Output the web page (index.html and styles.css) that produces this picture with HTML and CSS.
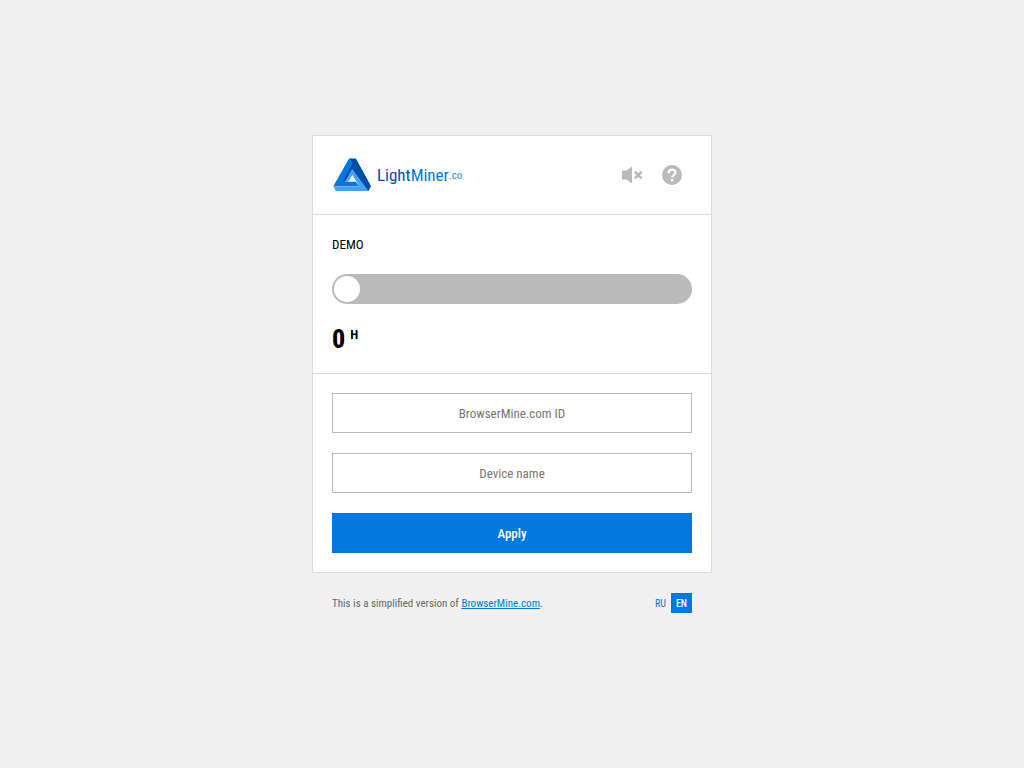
FILE: index.html
```html
<!DOCTYPE html>
<html lang="en">
<head>
<meta charset="utf-8">
<meta name="viewport" content="width=device-width, initial-scale=1">
<title>LightMiner.co</title>
<link rel="stylesheet" href="styles.css">
</head>
<body>
<div class="page">
  <main class="card">
    <header class="header">
      <a class="brand" href="#">
        <svg class="logo" viewBox="0 0 40 40" aria-hidden="true">
          <path fill="#0078e0" d="M17 3.600L1.300 31.200H27.300L23.700 26.700H12L21.500 9.500L20 3.600z"/>
          <path fill="#0050a4" d="M18 3.600H23.700L38.800 31L36.400 36L20.300 14.300L13.300 26.700H10.500L20.700 8.500z"/>
          <path fill="#44a1fa" d="M1.300 31.200L4 36H36.400L38.200 32.500L20.300 14L13.300 26.700H16.300L20.300 20L27.300 31.200z"/>
          <path fill="#0050a4" d="M20.300 8V14L36.400 36L38.800 31L23.700 3.600z"/>
        </svg>
        <span class="wordmark"><span class="light">Light</span><span class="miner">Miner</span><span class="tld">.co</span></span>
      </a>
      <div class="tools">
        <button class="tool" type="button" aria-label="Sound off">
          <svg class="icon" viewBox="0 0 24 24" aria-hidden="true"><path fill="currentColor" d="M2 7.500h4.500L11 4h1v16h-1l-4.500-3.500H2z"/><path fill="none" stroke="currentColor" stroke-width="2.500" d="M14.800 8.600l6.800 6.800M21.600 8.600l-6.800 6.800"/></svg>
        </button>
        <button class="tool" type="button" aria-label="Help">
          <svg class="icon" viewBox="0 0 24 24" aria-hidden="true"><circle cx="12" cy="12" r="10" fill="currentColor"/><path fill="none" stroke="#fff" stroke-width="2.200" d="M8.600 10.200C8.600 5.500 15.500 5.700 15.500 9.700C15.500 11.900 12.200 12.100 12.200 14.500"/><path fill="#fff" d="M11 16h2.400v2.300H11z"/></svg>
        </button>
      </div>
    </header>
    <section class="status">
      <h1 class="title">DEMO</h1>
      <input class="power" type="range" min="0" max="100" value="0" aria-label="Power">
      <p class="rate">0 <sup class="unit">H</sup></p>
    </section>
    <form class="form">
      <input class="field" type="text" placeholder="BrowserMine.com ID" aria-label="BrowserMine.com ID">
      <input class="field" type="text" placeholder="Device name" aria-label="Device name">
      <button class="apply" type="button">Apply</button>
    </form>
  </main>
  <footer class="footer">
    <p class="note">This is a simplified version of <a class="link" href="#">BrowserMine.com</a>.</p>
    <nav class="languages" aria-label="Language">
      <a class="language" href="#">RU</a>
      <a class="language current" href="#" aria-current="true">EN</a>
    </nav>
  </footer>
</div>
</body>
</html>
```
FILE: styles.css
```css
* { box-sizing: border-box; }

body {
  margin: 0;
  min-height: 100vh;
  display: flex;
  align-items: center;
  justify-content: center;
  background: #f0f0f0;
  color: #000;
  font: 13px/20px "Roboto Condensed", "Liberation Sans Narrow", Roboto, sans-serif;
}

input, button { font: inherit; }

.page { width: 100%; max-width: 400px; }

.card { background: #fff; border: 1px solid #dcdcdc; }

.header {
  display: flex;
  align-items: center;
  justify-content: space-between;
  padding: 19px;
  border-bottom: 1px solid #dcdcdc;
}

.brand { display: flex; align-items: center; gap: 5px; text-decoration: none; }
.logo { display: block; width: 40px; height: 40px; }
.wordmark { display: flex; align-items: center; font-size: 17px; }
.light { color: #0050a4; }
.miner { color: #0078e0; }
.tld { color: #2a90f0; font-size: 11px; line-height: 18px; padding-top: 2px; }

.tools { display: flex; }
.tool {
  display: flex;
  align-items: center;
  justify-content: center;
  width: 40px;
  height: 40px;
  padding: 0;
  border: 0;
  background: none;
  color: #bababa;
}
.icon { display: block; width: 24px; height: 24px; }

.status {
  display: flex;
  flex-direction: column;
  gap: 19px;
  padding: 20px 19px 18px;
  border-bottom: 1px solid #dcdcdc;
}
.title { margin: 0; font-size: 13px; line-height: 20px; font-weight: 400; }
.power {
  appearance: none;
  width: 100%;
  height: 30px;
  margin: 0;
  padding: 0 2px;
  border-radius: 15px;
  background: #bababa;
}
.power::-webkit-slider-thumb {
  appearance: none;
  width: 26px;
  height: 26px;
  border-radius: 50%;
  background: #fff;
}
.rate {
  display: flex;
  align-items: flex-start;
  gap: 5px;
  margin: 0;
  font-size: 26px;
  line-height: 32px;
  font-weight: 800;
}
.unit { font-size: 13px; line-height: 24px; font-weight: 700; }

.form { display: flex; flex-direction: column; gap: 20px; padding: 19px; }
.field {
  width: 100%;
  height: 40px;
  padding: 0 10px;
  border: 1px solid #bababa;
  border-radius: 0;
  background: #fff;
  text-align: center;
}
.field::placeholder { color: #757575; }
.apply {
  height: 40px;
  padding: 2px 10px 0;
  border: 0;
  background: #0078e0;
  color: #fff;
  font-weight: 500;
}

.footer {
  display: flex;
  align-items: center;
  justify-content: space-between;
  padding: 20px;
  color: #666;
  font-size: 11px;
  line-height: 18px;
}
.note { margin: 0; padding-top: 2px; }
.link { color: #0078e0; }
.languages { display: flex; }
.language { padding: 2px 5px 0; color: #0078e0; font-size: 10px; text-decoration: none; }
.current { background: #0078e0; color: #fff; font-weight: 500; }
```
